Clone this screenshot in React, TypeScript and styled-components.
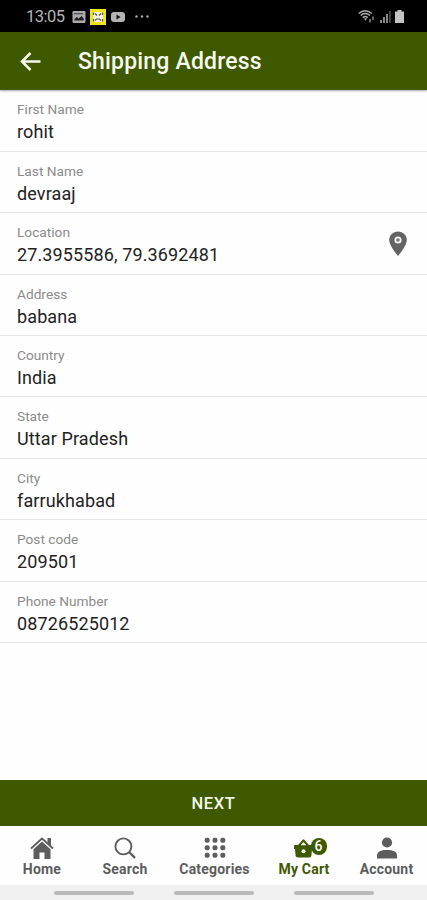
import React from "react";
import styled, { createGlobalStyle } from "styled-components";

const GREEN = "#3e5900";
const GREY = "#5d5d5d";

const GlobalStyle = createGlobalStyle`
  * { box-sizing: border-box; }
  body { margin: 0; background: #fff; font-family: Roboto, "Liberation Sans", sans-serif; }
`;

const Screen = styled.div`
  display: flex;
  flex-direction: column;
  width: 427px;
  height: 900px;
  overflow: hidden;
  background: #fefefe;
`;

const StatusBar = styled.div`
  display: flex;
  align-items: center;
  flex: none;
  height: 32px;
  padding: 1px 23px 0 26px;
  background: #000;
  color: #b4b4b4;
`;

const Clock = styled.span`
  width: 46px;
  font-size: 16.5px;
  letter-spacing: -0.5px;
  line-height: 20px;
`;

const StatusGroup = styled.div<{ $end?: boolean }>`
  display: flex;
  align-items: center;
  gap: ${(p) => (p.$end ? 4.5 : 4)}px;
  margin-left: ${(p) => (p.$end ? "auto" : "0")};
`;

const Header = styled.header`
  display: flex;
  align-items: center;
  flex: none;
  height: 58px;
  padding: 1px 0 0 20px;
  background: ${GREEN};
  box-shadow: 0 1px 2px rgba(0, 0, 0, 0.35);
`;

const BackButton = styled.button`
  display: flex;
  width: 58px;
  padding: 0;
  border: 0;
  background: none;
`;

const Title = styled.h1`
  margin: 0;
  color: #f8faef;
  font-size: 23px;
  font-weight: 500;
  letter-spacing: 0.18px;
  line-height: 28px;
`;

const Form = styled.main`
  flex: 1;
  padding-top: 0.5px;
`;

const Field = styled.div`
  display: flex;
  align-items: center;
  justify-content: space-between;
  height: 61.4px;
  padding: 0 19px 0 17px;
  border-bottom: 1.5px solid #e5e5e5;
`;

const FieldText = styled.div`
  display: flex;
  flex-direction: column;
  padding-top: 4.6px;
`;

const Label = styled.span`
  color: #8b8b8b;
  font-size: 13.7px;
  line-height: 18px;
`;

const Value = styled.span`
  margin-top: 1px;
  color: #222;
  font-size: 18px;
  letter-spacing: 0.12px;
  line-height: 26px;
`;

const NextButton = styled.button`
  flex: none;
  height: 46px;
  padding: 0;
  border: 0;
  background: ${GREEN};
  color: #f4f7e8;
  font: 500 16.5px Roboto, sans-serif;
  letter-spacing: 0.6px;
`;

const TabBar = styled.nav`
  display: grid;
  grid-template-columns: 84px 82px 97px 82px 83px;
  flex: none;
  height: 59px;
  padding-top: 9px;
`;

const Tab = styled.div<{ $active?: boolean }>`
  display: flex;
  flex-direction: column;
  align-items: center;
  color: ${(p) => (p.$active ? GREEN : GREY)};
`;

const TabIcon = styled.div<{ $badged?: boolean }>`
  display: flex;
  align-items: center;
  height: 26px;
  padding-left: ${(p) => (p.$badged ? 12 : 0)}px;
`;

const TabLabel = styled.span`
  font-size: 14px;
  font-weight: 700;
  letter-spacing: 0.2px;
  line-height: 17px;
`;

const CountBadge = styled.span`
  width: 16px;
  height: 17px;
  margin: -4px 0 0 -2px;
  border-radius: 8px;
  background: ${GREEN};
  color: #fff;
  font-size: 14px;
  font-weight: 500;
  line-height: 17px;
  text-align: center;
`;

const GestureBar = styled.div`
  display: flex;
  justify-content: center;
  gap: 40px;
  flex: none;
  height: 15px;
  padding-top: 6px;
  background: #f1f1f1;
`;

const Handle = styled.span`
  width: 80px;
  height: 4px;
  border-radius: 2px;
  background: #bababa;
`;

const fields = [
  ["First Name", "rohit"],
  ["Last Name", "devraaj"],
  ["Location", "27.3955586, 79.3692481"],
  ["Address", "babana"],
  ["Country", "India"],
  ["State", "Uttar Pradesh"],
  ["City", "farrukhabad"],
  ["Post code", "209501"],
  ["Phone Number", "08726525012"],
];

const StatusIcons = () => (
  <StatusGroup>
    <svg width="14" height="12" viewBox="0 0 14 12">
      <rect x="0.5" width="13" height="12" rx="1.3" fill="#aaa" />
      <path d="M2.5 9.5V8l2.2-2 2 1.5L9.5 5l2.2 2.5v2z" fill="#222" />
      <path d="M2 2h9v1.3H2z" fill="#555" />
    </svg>
    <svg width="16" height="16" viewBox="0 0 16 16">
      <path d="M0 0h16v16H0z" fill="#eee51b" />
      <path d="M3 3h10v10H3z" fill="#f5f5df" />
      <path d="M3.5 6V3.5M12.5 3.5V6M3.5 10v2.5M12.5 12.5V10M5 4.500L7 6.500M11 4.500L9 6.500M5 11.500l1.500-1.500h3l1.500 1.500" fill="none" stroke="#555" strokeWidth="1.2" />
    </svg>
    <svg width="16" height="12" viewBox="0 0 16 12">
      <rect x="1" y="1" width="14" height="10" rx="3" fill="#b3b3b3" />
      <path d="M6.5 3.5v5l4-2.5z" fill="#111" />
    </svg>
    <svg width="24" height="12" viewBox="0 0 24 12" fill="#aaa">
      <circle cx="6.5" cy="5.5" r="1.2" />
      <circle cx="12" cy="5.5" r="1.2" />
      <circle cx="17.5" cy="5.5" r="1.2" />
    </svg>
  </StatusGroup>
);

const SignalIcons = () => (
  <StatusGroup $end>
    <svg width="17" height="15" viewBox="0 0 17 15" fill="none" stroke="#aaa" strokeWidth="1.5">
      <path d="M.7 4.5Q7 -1 14 4.5M2.7 6.5Q7 2.6 12 6.5M4.8 8.6Q7.3 6.4 9.7 8.6" />
      <path d="M6 9.3h3L7.5 12z" fill="#aaa" stroke="none" />
      <path d="M12 10v3.5M15 7.5v3.5" stroke="#888" />
    </svg>
    <svg width="11" height="13" viewBox="0 0 11 13">
      <path d="M0 10h2v3H0zM3 7h2v6H3zM6 4h2v9H6z" fill="#888" />
      <path d="M9 1h2v12H9z" fill="#444" />
    </svg>
    <svg width="9" height="13" viewBox="0 0 9 13" fill="#c4c4c4">
      <path d="M2.5 0h4v1.5H9V13H0V1.5h2.5z" />
    </svg>
  </StatusGroup>
);

const BackArrow = () => (
  <svg width="22" height="20" viewBox="0 0 22 20" fill="none" stroke="#f5f8ed" strokeWidth="2.5">
    <path d="M20.5 9.5H2.5M10.5 1L2 9.5l8.5 8.5" />
  </svg>
);

const Pin = () => (
  <svg width="20" height="27" viewBox="0 0 20 27">
    <path d="M10 1.5C5 1.5 1.2 5.2 1.2 10.1 1.2 16.3 10 26 10 26s8.8-9.7 8.8-15.9C18.8 5.2 15 1.5 10 1.5z" fill="#636363" />
    <circle cx="10" cy="10" r="2.7" fill="#777" stroke="#f4f4f4" strokeWidth="1.8" />
  </svg>
);

const HomeIcon = () => (
  <svg width="24" height="22" viewBox="0 0 24 22" fill="currentColor">
    <path d="M17.5 1H21v8l-3.5-3.2zM12 4.6l8.500 7.600V22h-6v-6.500h-5V22h-6v-9.800z" />
    <path d="M1 11.500L12 1.500l11 10" fill="none" stroke="currentColor" strokeWidth="1.8" />
  </svg>
);

const SearchIcon = () => (
  <svg width="22" height="22" viewBox="0 0 22 22" fill="none" stroke="currentColor">
    <circle cx="9.4" cy="9.4" r="8" strokeWidth="1.9" />
    <path d="M15 15l6 5.8" strokeWidth="2.4" />
  </svg>
);

const GridIcon = () => (
  <svg width="22" height="22" viewBox="0 0 22 22" fill="currentColor">
    {[3.3, 10.8, 18.3].map((y) =>
      [3.2, 11, 18.8].map((x) => <rect key={`${x}-${y}`} x={x - 2.5} y={y - 2.5} width="5" height="5" rx="2" />)
    )}
  </svg>
);

const BasketIcon = () => (
  <svg width="19" height="20" viewBox="0 0 19 20">
    <path d="M0 8Q0 7 1 7h17q1 0 1 1v3h-1l-.6 6.500q-.4 2-2 2H3.600q-1.600 0-2-2L1 11H0z" fill="currentColor" />
    <path d="M4.5 8.2l5-5.700 5 5.700" fill="none" stroke="currentColor" strokeWidth="2.2" strokeLinejoin="round" />
    <path d="M6.8 7.300L9.5 4.500l2.7 2.800z" fill="#fefefe" />
    <circle cx="9.5" cy="13.200" r="2" fill="#f7faef" />
  </svg>
);

const AccountIcon = () => (
  <svg width="22" height="22" viewBox="0 0 22 22" fill="currentColor">
    <circle cx="11" cy="5.5" r="5.1" />
    <path d="M1 21.5v-3C1 14.5 5 13 11 13s10 1.5 10 5.5v3z" />
  </svg>
);

export default function App() {
  return (
    <>
      <GlobalStyle />
      <Screen>
        <StatusBar>
          <Clock>13:05</Clock>
          <StatusIcons />
          <SignalIcons />
        </StatusBar>
        <Header>
          <BackButton aria-label="Back"><BackArrow /></BackButton>
          <Title>Shipping Address</Title>
        </Header>
        <Form>
          {fields.map(([label, value]) => (
            <Field key={label}>
              <FieldText>
                <Label>{label}</Label>
                <Value>{value}</Value>
              </FieldText>
              {label === "Location" && <Pin />}
            </Field>
          ))}
        </Form>
        <NextButton>NEXT</NextButton>
        <TabBar>
          <Tab><TabIcon><HomeIcon /></TabIcon><TabLabel>Home</TabLabel></Tab>
          <Tab><TabIcon><SearchIcon /></TabIcon><TabLabel>Search</TabLabel></Tab>
          <Tab><TabIcon><GridIcon /></TabIcon><TabLabel>Categories</TabLabel></Tab>
          <Tab $active>
            <TabIcon $badged><BasketIcon /><CountBadge>6</CountBadge></TabIcon>
            <TabLabel>My Cart</TabLabel>
          </Tab>
          <Tab><TabIcon><AccountIcon /></TabIcon><TabLabel>Account</TabLabel></Tab>
        </TabBar>
        <GestureBar><Handle /><Handle /><Handle /></GestureBar>
      </Screen>
    </>
  );
}
